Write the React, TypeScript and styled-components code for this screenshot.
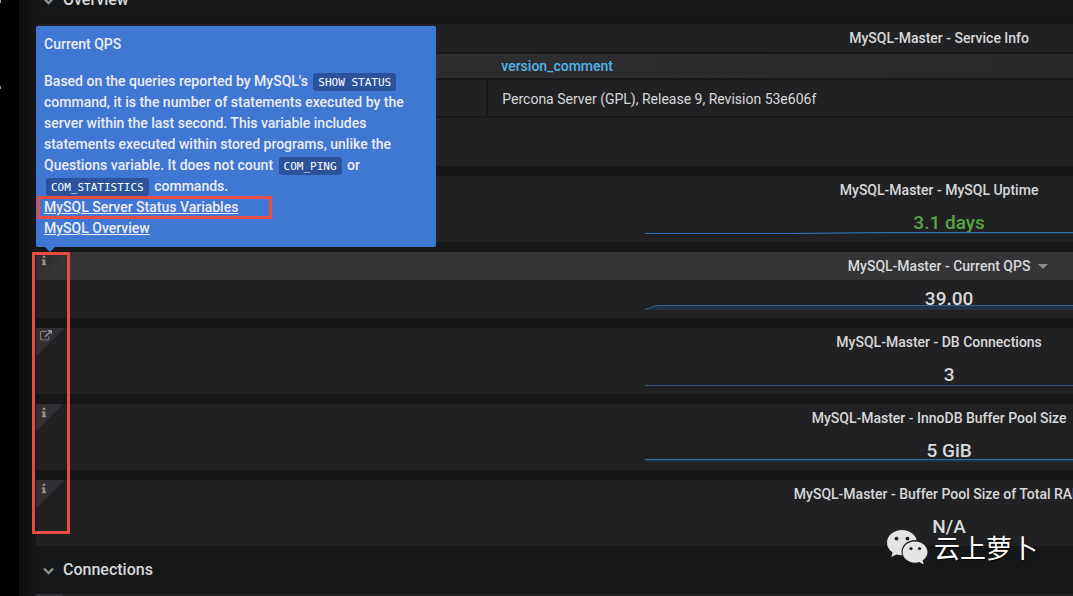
import React from 'react';
import styled, { createGlobalStyle, css } from 'styled-components';

const GlobalStyle = createGlobalStyle`
  * { box-sizing: border-box; }
  body {
    margin: 0;
    background: #161719;
    color: #d8d9da;
    font: 400 14px/21px Roboto, 'Liberation Sans', sans-serif;
  }
`;

const Page = styled.div`
  position: relative;
  display: flex;
  height: 100vh;
  overflow: hidden;
`;

const SideMenu = styled.nav`
  position: relative;
  flex: 0 0 19px;
  background: #000;
`;

const MenuMark = styled.span<{ $top: number; $size: number }>`
  position: absolute;
  left: 0;
  top: ${(p) => p.$top}px;
  width: 1px;
  height: ${(p) => p.$size}px;
  background: #9a9a9a;
`;

const Main = styled.main`
  flex: 1;
  min-width: 0;
  padding-left: 16px;
  background: linear-gradient(to right, #0c0d0e, #161719 16px);
`;

/* The board is wider than the view and is scrolled half a row down. */
const Board = styled.div`
  display: flex;
  flex-direction: column;
  gap: 8px;
  width: 174.2%;
  margin-top: -23px;
`;

const RowHeader = styled.h2`
  display: flex;
  align-items: center;
  gap: 9px;
  height: 46px;
  margin: 0 0 -8px;
  padding-left: 8px;
  font-size: 16px;
  font-weight: 500;
  line-height: 24px;

  &:not(:first-child) {
    margin-top: -8px;
  }
`;

const PanelBox = styled.section<{ $tall?: boolean }>`
  position: relative;
  min-height: ${(p) => (p.$tall ? 144 : 68)}px;
  border: 1px solid #141414;
  border-radius: 3px;
  background: #212124;
`;

const PanelHeader = styled.header<{ $active?: boolean }>`
  display: flex;
  justify-content: center;
  height: 28px;
  background: ${(p) => (p.$active ? '#343436' : 'transparent')};
`;

const PanelTitle = styled.h3`
  position: relative;
  margin: 0;
  font-size: 14px;
  font-weight: 500;
  line-height: 28px;
`;

const MenuCaret = styled.span`
  position: absolute;
  top: 12px;
  left: calc(100% + 8px);
  border: 5px solid transparent;
  border-top-color: #8e8e8e;
  border-bottom: 0;
`;

const Corner = styled.button<{ $active?: boolean; $link?: boolean }>`
  position: absolute;
  top: 0;
  left: 0;
  display: flex;
  width: 28px;
  height: 28px;
  padding: ${(p) => (p.$link ? '2px 0 0 4px' : '3px 0 0 2px')};
  border: 0;
  color: #8e8e8e;
  background: linear-gradient(135deg, ${(p) => (p.$active ? '#2f2f32' : '#303034')} 50%, transparent 50%);
`;

const Value = styled.div<{ $good?: boolean }>`
  position: relative;
  padding: 4px 0 0 20px;
  color: ${(p) => (p.$good ? '#56a641' : '#d8d9da')};
  font-size: 19px;
  font-weight: 500;
  line-height: 29px;
  text-align: center;
`;

const Spark = styled.svg`
  position: absolute;
  right: 0;
  bottom: 6px;
  width: 66.3%;
  height: 12px;
`;

const InfoTable = styled.table`
  width: 100%;
  border-collapse: collapse;
  table-layout: fixed;
  text-align: left;
`;

const cell = css`
  padding: 0 0 0 14px;
  border-top: 2px solid #161719;
  border-bottom: 2px solid #161719;
`;

const HeadRow = styled.tr`
  height: 26px;
  background: linear-gradient(to right, #303032, #28282a 70%);
`;

const HeadCell = styled.th`
  ${cell}
  color: #52b3e6;
  font-weight: 500;
`;

const Cell = styled.td`
  ${cell}
  height: 38px;
  padding-top: 2px;
  border-right: 2px solid #161719;
`;

const Tooltip = styled.div`
  position: absolute;
  z-index: 2;
  bottom: calc(100% + 5px);
  left: 0;
  width: 400px;
  padding: 8px;
  border-radius: 2px;
  color: #ebedf2;
  background: #4077d3;
  font-weight: 500;

  &::after {
    content: '';
    position: absolute;
    top: 100%;
    left: 9px;
    border: 5px solid transparent;
    border-top-color: #4077d3;
    border-bottom: 0;
  }
`;

const TipTitle = styled.p`
  margin: 0 0 16px;
`;

const TipText = styled.p`
  margin: 0;
`;

const Code = styled.code`
  margin: 0 2px;
  padding: 3px 5px 2px;
  border-radius: 3px;
  color: #fff;
  background: #2a539b;
  font: 400 11px/13px 'DejaVu Sans Mono', monospace;
`;

const TipLink = styled.a`
  display: table;
  color: inherit;
  text-decoration: underline;
`;

const Marker = styled.div<{ $x: number; $y: number; $w: number; $h: number }>`
  position: absolute;
  z-index: 3;
  left: ${(p) => p.$x}px;
  top: ${(p) => p.$y}px;
  width: ${(p) => p.$w}px;
  height: ${(p) => p.$h}px;
  border: 3px solid #ea4c42;
  pointer-events: none;
`;

const Watermark = styled.div`
  position: absolute;
  z-index: 3;
  right: 35px;
  bottom: 30px;
  display: flex;
  align-items: center;
  gap: 6px;
  color: #fff;
  font: 400 26px/38px 'Noto Sans CJK SC', sans-serif;
  text-shadow: 1px 1px 1px #000;
`;

const InfoIcon = () => (
  <svg width="12" height="12" viewBox="0 0 1792 1792" fill="currentColor" aria-hidden="true">
    <path d="M1216 1344v128q0 26-19 45t-45 19h-512q-26 0-45-19t-19-45v-128q0-26 19-45t45-19h64v-384h-64q-26 0-45-19t-19-45v-128q0-26 19-45t45-19h384q26 0 45 19t19 45v576h64q26 0 45 19t19 45zm-128-1152v192q0 26-19 45t-45 19h-256q-26 0-45-19t-19-45v-192q0-26 19-45t45-19h256q26 0 45 19t19 45z" />
  </svg>
);

const LinkIcon = () => (
  <svg width="12" height="12" viewBox="0 0 1792 1792" fill="currentColor" aria-hidden="true">
    <path d="M1408 928v320q0 119-84.5 203.5t-203.5 84.5h-832q-119 0-203.5-84.5t-84.5-203.5v-832q0-119 84.5-203.5t203.5-84.5h704q14 0 23 9t9 23v64q0 14-9 23t-23 9h-704q-66 0-113 47t-47 113v832q0 66 47 113t113 47h832q66 0 113-47t47-113v-320q0-14 9-23t23-9h64q14 0 23 9t9 23zm384-864v512q0 26-19 45t-45 19-45-19l-176-176-652 652q-10 10-23 10t-23-10l-114-114q-10-10-10-23t10-23l652-652-176-176q-19-19-19-45t19-45 45-19h512q26 0 45 19t19 45z" />
  </svg>
);

const ChevronIcon = () => (
  <svg width="11" height="10" viewBox="0 0 11 10" fill="none" stroke="#8e8e8e" strokeWidth="2.4" aria-hidden="true">
    <path d="M1 3.500l4.500 4.500L10 3.500" />
  </svg>
);

const ChatLogo = () => (
  <svg width="41" height="35" viewBox="0 0 41 35" aria-hidden="true">
    <path
      fill="#e4e4e4"
      d="M15 0C6.700 0 0 5.600 0 12.700c0 4 2.200 7.500 5.600 9.800L4.300 27l5-2.600c1.800.5 3.700.8 5.700.8C23.300 25.200 30 19.700 30 12.700S23.300 0 15 0z"
    />
    <ellipse cx="28" cy="22" rx="13.500" ry="12" fill="#1b1c1e" />
    <path
      fill="#e4e4e4"
      d="M28 11.500c-6.900 0-12.400 4.700-12.400 10.600S21.100 32.700 28 32.700c1.500 0 3-.2 4.300-.6l4.500 2.400-1.200-3.900c3-1.900 4.900-5 4.900-8.500 0-5.900-5.600-10.600-12.500-10.600z"
    />
    <g fill="#161719">
      <circle cx="9.500" cy="8.600" r="1.900" />
      <circle cx="20.500" cy="8.600" r="1.900" />
      <circle cx="24" cy="18.500" r="1.600" />
      <circle cx="32.500" cy="18.500" r="1.600" />
    </g>
  </svg>
);

type Trend = { line: string; area: string; color: string };

type Stat = {
  title: string;
  value: string;
  good?: boolean;
  icon?: 'info' | 'link';
  active?: boolean;
  trend?: Trend;
};

const stats: Stat[] = [
  {
    title: 'MySQL Uptime',
    value: '3.1 days',
    good: true,
    trend: { line: 'M0 9.500H12L20 8.500H100', area: 'M0 10L20 8.500H100V10Z', color: '#3274b5' },
  },
  {
    title: 'Current QPS',
    value: '39.00',
    icon: 'info',
    active: true,
    trend: { line: 'M0 9.500L1 5.500H100', area: 'M0 10L1 5.500H100V10Z', color: '#2d6296' },
  },
  { title: 'DB Connections', value: '3', icon: 'link', trend: { line: 'M0 9.500H100', area: '', color: '#2d5681' } },
  {
    title: 'InnoDB Buffer Pool Size',
    value: '5 GiB',
    icon: 'info',
    trend: { line: 'M0 7.500H100', area: 'M0 7.500H100V10H0Z', color: '#3274ad' },
  },
  { title: 'Buffer Pool Size of Total RAM', value: 'N/A', icon: 'info' },
];

const QpsTooltip = () => (
  <Tooltip role="tooltip">
    <TipTitle>Current QPS</TipTitle>
    <TipText>
      Based on the queries reported by MySQL's <Code>SHOW STATUS</Code> command, it is the number of statements
      executed by the server within the last second. This variable includes statements executed within stored
      programs, unlike the Questions variable. It does not count <Code>COM_PING</Code> or <Code>COM_STATISTICS</Code>{' '}
      commands.
    </TipText>
    <TipLink href="#status-variables">MySQL Server Status Variables</TipLink>
    <TipLink href="#mysql-overview">MySQL Overview</TipLink>
  </Tooltip>
);

const StatPanel = ({ title, value, good, icon, active, trend }: Stat) => (
  <PanelBox>
    <PanelHeader $active={active}>
      <PanelTitle>
        MySQL-Master - {title}
        {active && <MenuCaret />}
      </PanelTitle>
    </PanelHeader>
    {icon && (
      <Corner $active={active} $link={icon === 'link'} aria-label={`${title} details`}>
        {icon === 'info' ? <InfoIcon /> : <LinkIcon />}
      </Corner>
    )}
    <Value $good={good}>{value}</Value>
    {trend && (
      <Spark viewBox="0 0 100 12" preserveAspectRatio="none" aria-hidden="true">
        <path d={trend.area} fill="#1f78c1" fillOpacity="0.2" />
        <path d={trend.line} fill="none" stroke={trend.color} vectorEffect="non-scaling-stroke" />
      </Spark>
    )}
    {active && <QpsTooltip />}
  </PanelBox>
);

export default function App() {
  return (
    <Page>
      <GlobalStyle />
      <SideMenu>
        <MenuMark $top={0} $size={3} />
        <MenuMark $top={86} $size={3} />
      </SideMenu>
      <Main>
        <Board>
          <RowHeader>
            <ChevronIcon />
            Overview
          </RowHeader>
          <PanelBox $tall>
            <PanelHeader>
              <PanelTitle>MySQL-Master - Service Info</PanelTitle>
            </PanelHeader>
            <InfoTable>
              <thead>
                <HeadRow>
                  <HeadCell />
                  <HeadCell>version_comment</HeadCell>
                  <HeadCell />
                  <HeadCell />
                </HeadRow>
              </thead>
              <tbody>
                <tr>
                  <Cell />
                  <Cell colSpan={3}>Percona Server (GPL), Release 9, Revision 53e606f</Cell>
                </tr>
              </tbody>
            </InfoTable>
          </PanelBox>
          {stats.map((stat) => (
            <StatPanel key={stat.title} {...stat} />
          ))}
          <RowHeader>
            <ChevronIcon />
            Connections
          </RowHeader>
          <PanelBox>
            <Corner aria-label="Connections details" />
          </PanelBox>
        </Board>
      </Main>
      <Marker $x={37} $y={196} $w={235} $h={23} />
      <Marker $x={32} $y={252} $w={38} $h={282} />
      <Watermark>
        <ChatLogo />
        云上萝卜
      </Watermark>
    </Page>
  );
}
